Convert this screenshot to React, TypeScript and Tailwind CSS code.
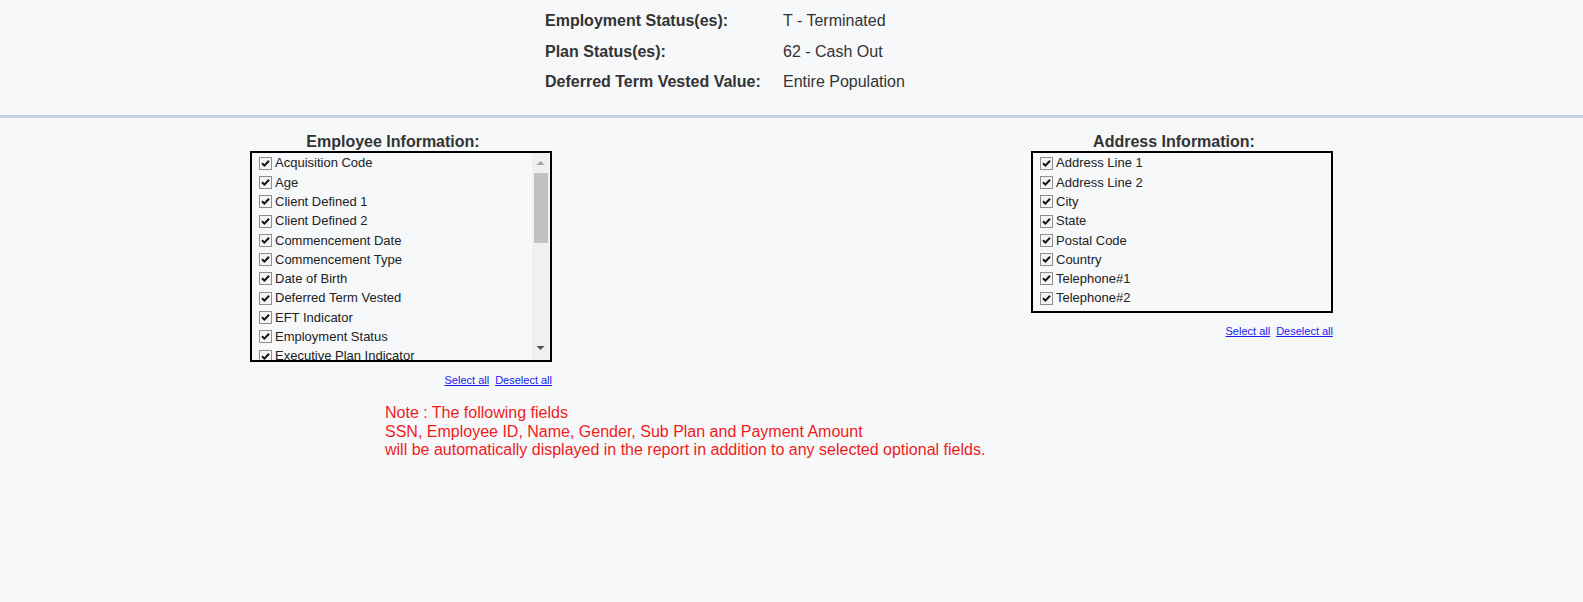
import React from "react";

const employeeFields = [
  "Acquisition Code",
  "Age",
  "Client Defined 1",
  "Client Defined 2",
  "Commencement Date",
  "Commencement Type",
  "Date of Birth",
  "Deferred Term Vested",
  "EFT Indicator",
  "Employment Status",
  "Executive Plan Indicator",
];

const addressFields = [
  "Address Line 1",
  "Address Line 2",
  "City",
  "State",
  "Postal Code",
  "Country",
  "Telephone#1",
  "Telephone#2",
];

const criteria = [
  { label: "Employment Status(es):", value: "T - Terminated" },
  { label: "Plan Status(es):", value: "62 - Cash Out" },
  { label: "Deferred Term Vested Value:", value: "Entire Population" },
];

function CheckRow({ label }: { label: string }) {
  return (
    <div className="flex h-[19.3px] items-center gap-[3px] whitespace-nowrap">
      <span className="flex h-[13px] w-[13px] shrink-0 items-center justify-center border border-[#8e8f8f] bg-[#f4f4f4]">
        <svg width="9" height="9" viewBox="0 0 9 9">
          <path d="M1 4.2 L3.4 6.6 L8 1.8" stroke="#111" strokeWidth="2" fill="none" />
        </svg>
      </span>
      <span className="text-[13px] text-[#222]">{label}</span>
    </div>
  );
}

function Links() {
  return (
    <div className="mt-[10px] flex justify-end gap-[6px] text-[11px] text-[#1a1aee]">
      <a href="#" className="underline">Select all</a>
      <a href="#" className="underline">Deselect all</a>
    </div>
  );
}

export default function App() {
  return (
    <div className="min-h-[602px] bg-[#f6f8fa] font-['Liberation_Sans',Arial,sans-serif] text-[#333]">
      <div className="pl-[545px] pt-[6px] pb-[17px]">
        {criteria.map((c) => (
          <div key={c.label} className="flex h-[30.5px] items-center text-[16px]">
            <span className="w-[238px] font-bold">{c.label}</span>
            <span>{c.value}</span>
          </div>
        ))}
      </div>
      <div className="h-[3px] bg-[#c6d4e2]" />

      <div className="flex justify-between px-[250px] pt-[15px]">
        <div className="w-[302px]">
          <div className="pr-[16px] text-center text-[16px] font-bold leading-[18px]">Employee Information:</div>
          <div className="flex h-[211px] border-2 border-black bg-[#f6f8fa]">
            <div className="flex-1 overflow-hidden pl-[7px] pt-[1px]">
              {employeeFields.map((f) => (
                <CheckRow key={f} label={f} />
              ))}
            </div>
            <div className="mr-[1px] flex w-[17px] flex-col items-center bg-[#f0f0f0]">
              <svg width="9" height="20" viewBox="0 0 9 20" className="shrink-0">
                <path d="M0.5 12 L4.5 8 L8.5 12 Z" fill="#a3a3a3" />
              </svg>
              <div className="h-[70px] w-[14px] bg-[#c1c1c1]" />
              <div className="flex-1" />
              <svg width="9" height="20" viewBox="0 0 9 20" className="shrink-0">
                <path d="M0.5 6 L4.5 10 L8.5 6 Z" fill="#505050" />
              </svg>
            </div>
          </div>
          <Links />
          <div className="mt-[16px] ml-[135px] whitespace-nowrap text-[16px] leading-[18.5px] text-[#f01c1c]">
            <div>Note : The following fields</div>
            <div>SSN, Employee ID, Name, Gender, Sub Plan and Payment Amount</div>
            <div>will be automatically displayed in the report in addition to any selected optional fields.</div>
          </div>
        </div>

        <div className="w-[302px]">
          <div className="pr-[16px] text-center text-[16px] font-bold leading-[18px]">Address Information:</div>
          <div className="border-2 border-black pl-[7px] pt-[1px] pb-[3px]">
            {addressFields.map((f) => (
              <CheckRow key={f} label={f} />
            ))}
          </div>
          <Links />
        </div>
      </div>
    </div>
  );
}
